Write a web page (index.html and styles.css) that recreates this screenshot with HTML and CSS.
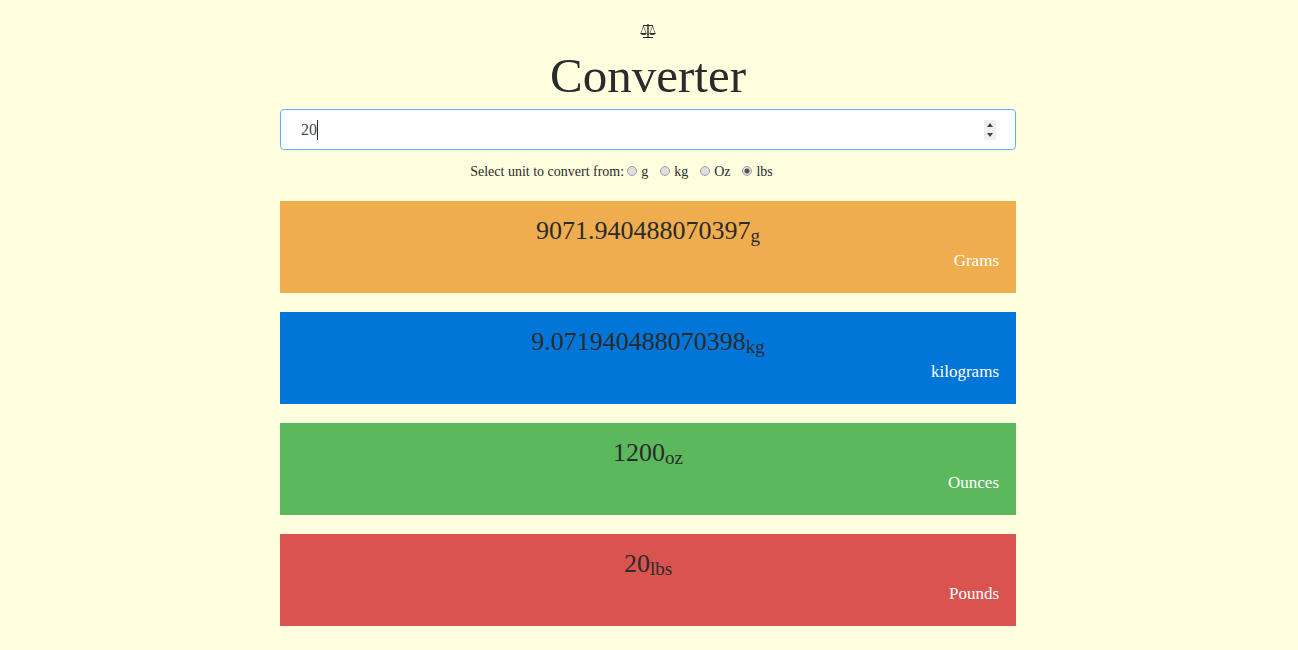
FILE: index.html
```html
<!DOCTYPE html>
<html lang="en">
<head>
<meta charset="utf-8">
<meta name="viewport" content="width=device-width, initial-scale=1">
<title>Converter</title>
<link rel="stylesheet" href="styles.css">
</head>
<body>
<main class="converter">
  <header class="header">
    <svg class="logo" viewBox="0 0 16 14" width="16" height="14" aria-hidden="true" fill="none" stroke="#292b2c">
      <path d="M3 1.5h10M3 13.5h10" stroke-width="1"/>
      <path d="M8 0v13" stroke-width="1.4"/>
      <path d="M3.5 2L1 9M3.5 2L6 9M12.5 2L10 9M12.5 2L15 9" stroke-width=".6"/>
      <path d="M0 9h7Q6 11 3.5 11T0 9zM9 9h7Q15 11 12.5 11T9 9z" fill="#292b2c" stroke="none"/>
    </svg>
    <h1 class="title">Converter</h1>
  </header>
  <form class="form">
    <div class="field">
      <input class="amount" type="number" value="20" aria-label="Amount">
      <span class="caret"></span>
      <div class="spinner">
        <button class="step" type="button" aria-label="Increase"><svg viewBox="0 0 8 4" width="8" height="4"><path d="M1 4L4 0L7 4z" fill="#444"/></svg></button>
        <button class="step" type="button" aria-label="Decrease"><svg viewBox="0 0 8 4" width="8" height="4"><path d="M1 0L4 4L7 0z" fill="#444"/></svg></button>
      </div>
    </div>
    <div class="units" role="radiogroup" aria-labelledby="units-label">
      <span class="units-label" id="units-label">Select unit to convert from:</span>
      <label class="unit"><input class="radio" type="radio" name="unit">g</label>
      <label class="unit"><input class="radio" type="radio" name="unit">kg</label>
      <label class="unit"><input class="radio" type="radio" name="unit">Oz</label>
      <label class="unit"><input class="radio" type="radio" name="unit" checked>lbs</label>
    </div>
  </form>
  <section class="results">
    <article class="card card-grams"><p class="value">9071.940488070397<span class="suffix">g</span></p><p class="name">Grams</p></article>
    <article class="card card-kilograms"><p class="value">9.071940488070398<span class="suffix">kg</span></p><p class="name">kilograms</p></article>
    <article class="card card-ounces"><p class="value">1200<span class="suffix">oz</span></p><p class="name">Ounces</p></article>
    <article class="card card-pounds"><p class="value">20<span class="suffix">lbs</span></p><p class="name">Pounds</p></article>
  </section>
</main>
</body>
</html>
```
FILE: styles.css
```css
* { box-sizing: border-box; }
body {
  margin: 0;
  padding: 0 18px 0 16px;
  background: #ffffe0;
  color: #292b2c;
  font-family: "Liberation Serif", serif;
}
.converter { max-width: 736px; margin: 0 auto; padding: 24px 0; }
.header { display: flex; flex-direction: column; align-items: center; }
.logo { display: block; }
.title { margin: 12px 0 7px; font-size: 49px; line-height: 52px; font-weight: 400; }
.field {
  position: relative;
  display: flex;
  align-items: center;
  height: 41px;
  padding: 0 19px 0 20px;
  background: #fff;
  border: 1px solid #5cb3fd;
  border-radius: 4px;
}
.amount {
  flex: 1;
  min-width: 0;
  padding: 0;
  border: 0;
  outline: 0;
  background: transparent;
  color: #464a4c;
  font: inherit;
  font-size: 16px;
  line-height: 20px;
  appearance: textfield;
}
.amount::-webkit-inner-spin-button { display: none; }
.caret { position: absolute; left: 36px; top: 10px; width: 1px; height: 20px; background: #292b2c; }
.spinner { display: flex; flex-direction: column; width: 12px; height: 20px; background: #efefef; }
.step {
  display: flex;
  flex: 1;
  align-items: center;
  justify-content: center;
  padding: 0;
  border: 0;
  background: transparent;
}
.units {
  display: flex;
  flex-wrap: wrap;
  justify-content: center;
  align-items: center;
  padding: 12px 53px 19px 0;
  font-size: 14px;
  line-height: 20px;
}
.units-label { margin-right: 3px; }
.unit { display: flex; align-items: center; margin-right: 12px; }
.unit:last-child { margin-right: 0; }
.radio {
  appearance: none;
  width: 10px;
  height: 10px;
  margin: 0 4px 2px 0;
  border: 1px solid #a0a0a0;
  border-radius: 50%;
  background: #dedede;
}
.radio:checked { background: radial-gradient(circle, #505050 0 2px, #dedede 3px); }
.results { display: grid; gap: 19px; }
.card { padding: 14px 17px 18px; }
.card-grams { background: #f0ad4e; }
.card-kilograms { background: #0275d8; }
.card-ounces { background: #5cb85c; }
.card-pounds { background: #d9534f; }
.value { display: flex; justify-content: center; margin: 0; font-size: 26px; line-height: 32px; }
.suffix { padding-top: 9px; font-size: 19px; line-height: 23px; }
.name { margin: 0; color: #fff; font-size: 17px; line-height: 28px; text-align: right; }
```
